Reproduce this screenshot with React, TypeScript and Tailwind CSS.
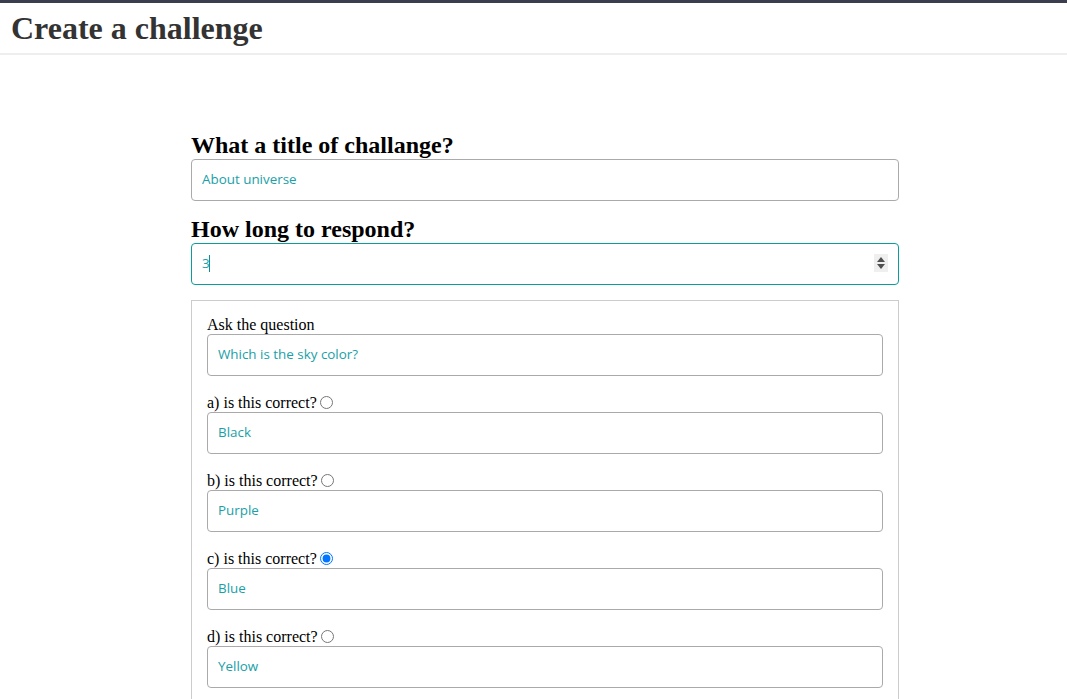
import React from "react";

const serif = { fontFamily: '"Liberation Serif", "Times New Roman", serif' };

function TextBox({ value, focused = false, spinner = false }: { value: string; focused?: boolean; spinner?: boolean }) {
  return (
    <div className="relative">
      <input
        readOnly
        value={value}
        className={`block w-full h-[42px] rounded-[4px] border bg-white px-[10px] pb-[2px] text-[13.4px] text-[#19a0a8] outline-none ${
          focused ? "border-[#0c9c9c]" : "border-[#aaaaaa]"
        }`}
        style={{ fontFamily: '"Open Sans", "Noto Sans", sans-serif' }}
      />
      {focused && <div className="absolute left-[18px] top-[12px] h-[17px] w-px bg-[#0e8f96]" />}
      {spinner && (
        <div className="absolute right-[11px] top-[11px] flex h-[18px] w-[14px] flex-col items-center justify-center gap-[2px] bg-[#efefef]">
          <svg width="8" height="5" viewBox="0 0 8 5"><path d="M0 5 L4 0 L8 5 Z" fill="#505050" /></svg>
          <svg width="8" height="5" viewBox="0 0 8 5"><path d="M0 0 L8 0 L4 5 Z" fill="#505050" /></svg>
        </div>
      )}
    </div>
  );
}

function Answer({ letter, value, checked = false }: { letter: string; value: string; checked?: boolean }) {
  return (
    <div className="mt-[18px]">
      <div className="flex h-[18px] items-center text-[16px] leading-[18px] text-black" style={serif}>
        <span>{letter}) is this correct?</span>
        <input type="radio" readOnly checked={checked} name="ans" className="ml-[3px] -mt-[2px] h-[13px] w-[13px]" />
      </div>
      <TextBox value={value} />
    </div>
  );
}

export default function App() {
  return (
    <div className="min-h-[699px] bg-white border-t-[3px] border-[#3b3e4e]">
      <header className="h-[52px] border-b-2 border-[#eeeeee] pl-[11px]">
        <h1 className="pt-[6px] text-[32px] font-bold leading-[38px] text-[#333333]" style={serif}>
          Create a challenge
        </h1>
      </header>
      <main className="ml-[191px] w-[708px] pt-[77px]">
        <h2 className="text-[24px] font-bold leading-[27px] text-black" style={serif}>
          What a title of challange?
        </h2>
        <TextBox value="About universe" />
        <h2 className="mt-[15px] text-[24px] font-bold leading-[27px] text-black" style={serif}>
          How long to respond?
        </h2>
        <TextBox value="3" focused spinner />
        <div className="mt-[15px] border border-[#cccccc] px-[15px] pt-[15px] pb-[20px]">
          <div className="h-[18px] text-[16px] leading-[18px] text-black" style={serif}>
            Ask the question
          </div>
          <TextBox value="Which is the sky color?" />
          <Answer letter="a" value="Black" />
          <Answer letter="b" value="Purple" />
          <Answer letter="c" value="Blue" checked />
          <Answer letter="d" value="Yellow" />
        </div>
      </main>
    </div>
  );
}
